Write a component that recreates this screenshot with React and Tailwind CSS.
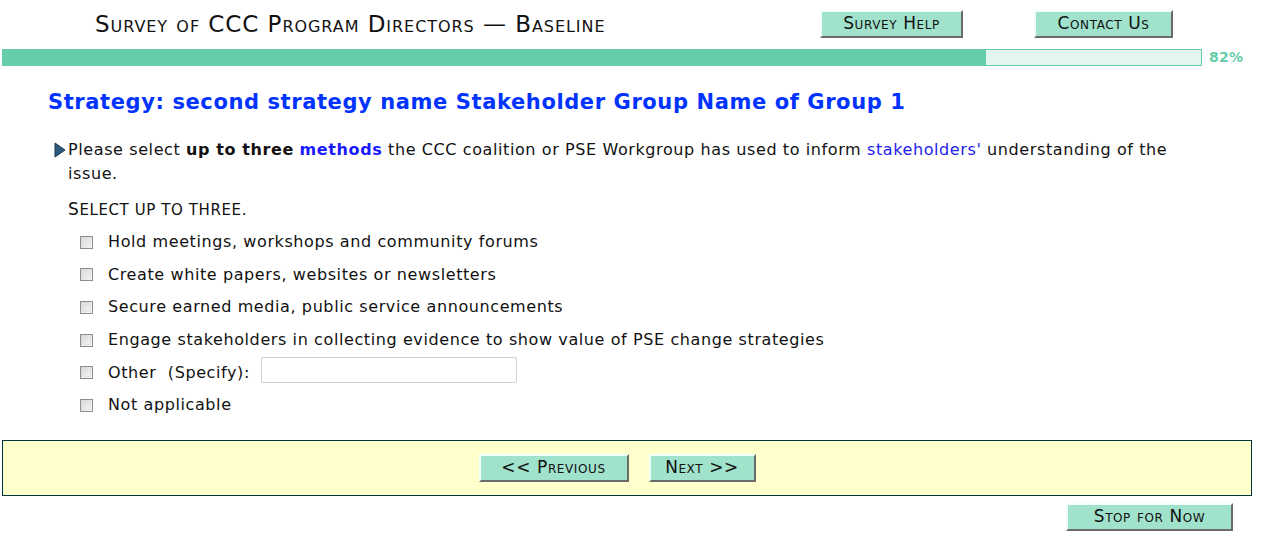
import React from 'react';

const font = { fontFamily: '"DejaVu Sans", Verdana, sans-serif' };

const options = [
  'Hold meetings, workshops and community forums',
  'Create white papers, websites or newsletters',
  'Secure earned media, public service announcements',
  'Engage stakeholders in collecting evidence to show value of PSE change strategies',
];

const Btn = ({ children, className = '' }) => (
  <button
    className={`h-[28px] bg-[#a0e2cb] text-[#111] text-[17px] tracking-[0.6px] [font-variant:small-caps] border-t-2 border-l-2 border-b-2 border-r-2 border-t-[#f0fff8] border-l-[#f0fff8] border-b-[#6b6b6b] border-r-[#6b6b6b] leading-none ${className}`}
  >
    {children}
  </button>
);

const Box = () => (
  <span className="inline-block w-[13px] h-[13px] border border-[#8e8e8e] bg-gradient-to-br from-[#d4d4d4] to-[#fbfbfb] p-[1px]">
    <span className="block w-full h-full border border-[#e2e2e2]" />
  </span>
);

const App = () => {
  return (
    <div className="w-[1283px] h-[548px] bg-white text-[#111]" style={font}>
      {/* Header */}
      <div className="flex items-center h-[49px] pb-[1px]">
        <h1 className="pl-[95px] text-[23px] [font-variant:small-caps] tracking-[0.95px] text-[#111]">
          Survey of CCC Program Directors — Baseline
        </h1>
        <div className="ml-auto flex gap-[71px] pr-[110px] -mt-[1px]">
          <Btn className="w-[143px]">Survey Help</Btn>
          <Btn className="w-[139px]">Contact Us</Btn>
        </div>
      </div>

      {/* Progress */}
      <div className="flex items-center h-[17px] pl-[2px]">
        <div className="flex w-[1200px] h-[17px] border border-[#66cdaa]">
          <div className="w-[983px] bg-[#66cdaa]" />
          <div className="flex-1 bg-[#e3f5ef]" />
        </div>
        <span className="ml-[7px] text-[14px] font-bold tracking-[0.3px] text-[#66cdaa]">82%</span>
      </div>

      {/* Heading */}
      <h2 className="pl-[48px] mt-[23px] text-[21px] font-bold tracking-[0.6px] text-[#0033ff] leading-[26px]">
        Strategy: second strategy name Stakeholder Group Name of Group 1
      </h2>

      {/* Question */}
      <div className="flex pl-[54px] mt-[23px] pr-[100px]">
        <svg width="12" height="16" viewBox="0 0 12 16" className="mt-[4px] shrink-0">
          <path d="M1 1 L11 8 L1 15 Z" fill="#2f5a80" stroke="#1c3550" strokeWidth="1" />
        </svg>
        <p className="pl-[2px] text-[16px] leading-[24px] tracking-[0.6px]">
          Please select <b>up to three</b> <b className="text-[#1a1aff]">methods</b> the CCC coalition or PSE Workgroup has used to inform{' '}
          <span className="text-[#2222ee]">stakeholders'</span> understanding of the issue.
        </p>
      </div>

      <div className="pl-[68px] mt-[13px] text-[15px] leading-[20px] tracking-[0.6px]">
        <span className="text-[17px]">S</span>ELECT UP TO THREE.
      </div>

      {/* Options */}
      <div className="pl-[80px] mt-[6px] flex flex-col">
        {options.map((o) => (
          <div key={o} className="flex items-center h-[32.6px]">
            <Box />
            <span className="ml-[15px] text-[16px] tracking-[0.6px]">{o}</span>
          </div>
        ))}
        <div className="flex items-center h-[32.6px]">
          <Box />
          <span className="ml-[15px] text-[16px] tracking-[0.6px]">Other&nbsp;&nbsp;(Specify):</span>
          <span className="ml-[11px] -mt-[5px] w-[256px] h-[26px] border border-[#d0d0d0] rounded-[2px] bg-white" />
        </div>
        <div className="flex items-center h-[32.6px]">
          <Box />
          <span className="ml-[15px] text-[16px] tracking-[0.6px]">Not applicable</span>
        </div>
      </div>

      {/* Nav */}
      <div className="mx-[2px] mt-[18px] w-[1250px] h-[56px] border border-[#003344] bg-[#ffffcc] flex items-center justify-center gap-[20px] pr-[20px]">
        <Btn className="w-[150px]">&lt;&lt; Previous</Btn>
        <Btn className="w-[107px]">Next &gt;&gt;</Btn>
      </div>

      <div className="flex justify-end pr-[50px] mt-[7px]">
        <Btn className="w-[167px]">Stop for Now</Btn>
      </div>
    </div>
  );
};

export default App;
